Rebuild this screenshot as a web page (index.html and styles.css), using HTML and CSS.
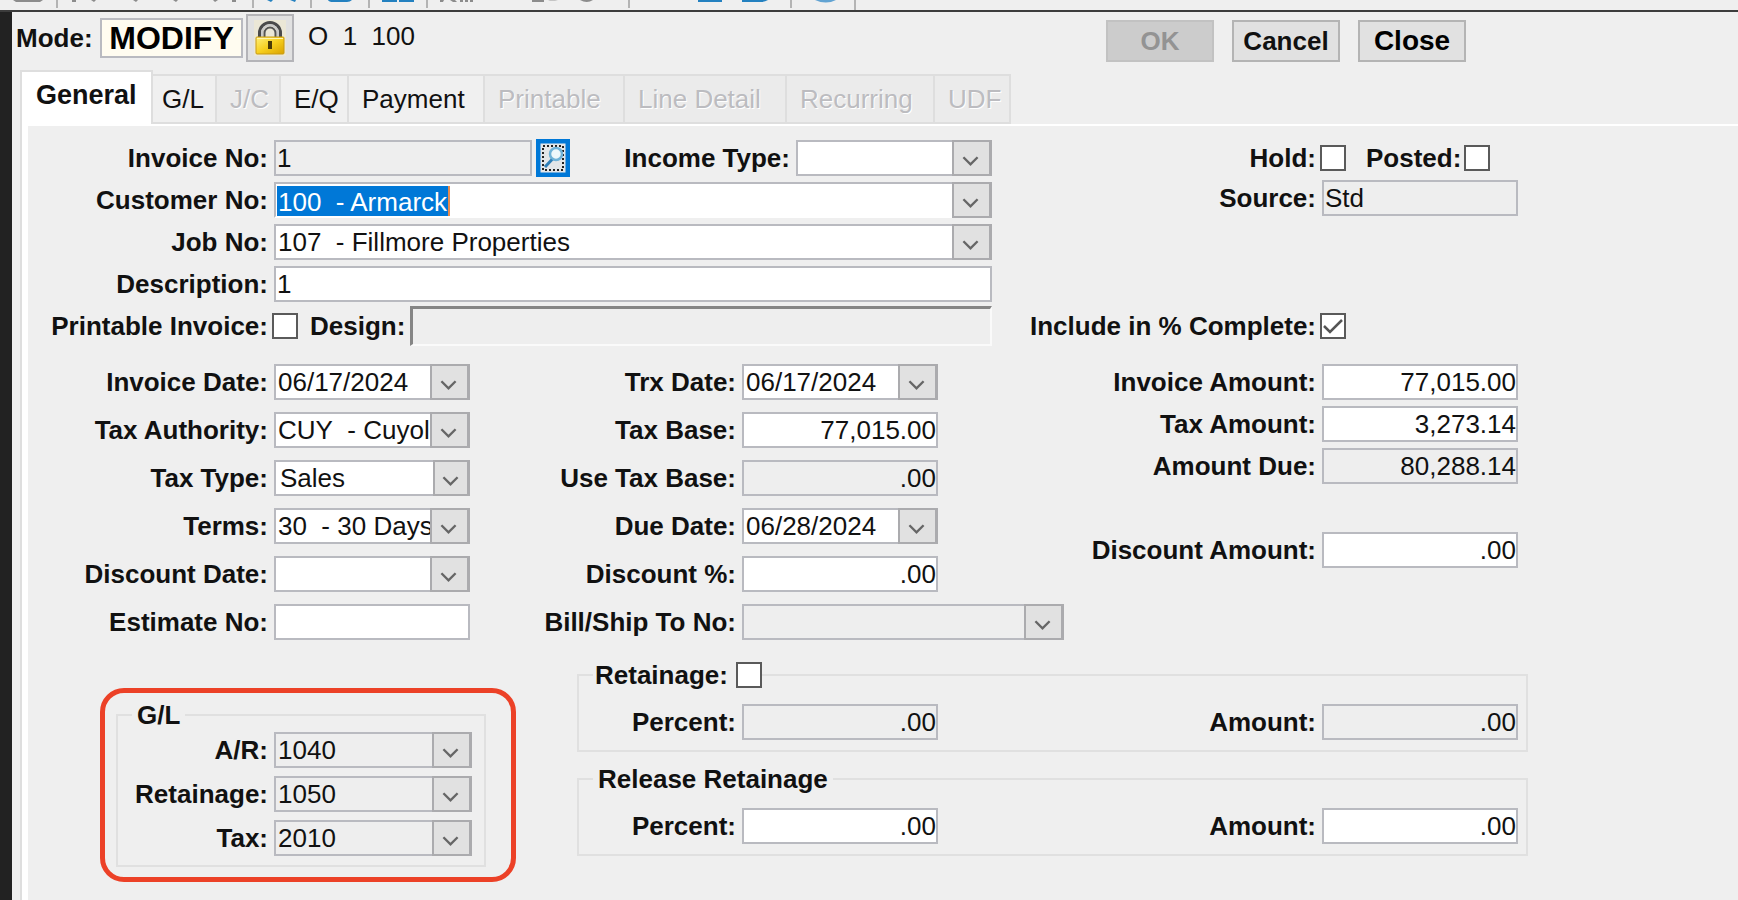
FILE: index.html
```html
<!DOCTYPE html>
<html lang="en">
<head>
<meta charset="utf-8">
<title>Invoice Entry</title>
<link rel="stylesheet" href="styles.css">
</head>
<body>
<svg class="defs" aria-hidden="true">
  <symbol id="chevron" viewBox="0 0 18 12"><path d="M1.500 2 L9 9.500 L16.500 2" fill="none" stroke="#666" stroke-width="2.500"/></symbol>
</svg>

<div class="toolbar" aria-hidden="true">
  <svg width="900" height="10" viewBox="0 0 900 10">
    <g fill="#b4b4b4">
      <rect x="56" width="2" height="8"/><rect x="252" width="2" height="8"/><rect x="310" width="2" height="8"/>
      <rect x="368" width="2" height="8"/><rect x="426" width="2" height="8"/><rect x="628" width="2" height="8"/>
      <rect x="790" width="2" height="8"/><rect x="854" width="2" height="10"/>
    </g>
    <g fill="#8c8c8c">
      <path d="M13 0H43L40 2H16Z"/><rect x="72" width="4" height="2"/><path d="M91 0h5l-2 2zM133 0h5l-2 2zM173 0h5l-2 2zM213 0h5l-3 2z"/><rect x="232" width="4" height="2"/>
      <path d="M440 0h4l-1 2h-3zM450 0h5l2 2h-4zM460 0h3v2h-3zM465 0h3v2h-3zM470 0h3v2h-3z"/>
      <rect x="532" width="12" height="2"/><path d="M580 0h13q-6 4-13 0z"/>
    </g>
    <path d="M548 0h10l-3 1h-5z" fill="#c4c4c4"/>
    <g fill="#2481c0">
      <path d="M267 0h6l-2 2zM290 0h6l-1 2zM328 0h24q-2 2-5 2h-14q-4 0-5-2z"/>
      <rect x="382" width="15" height="2"/><rect x="399" width="15" height="2"/>
      <rect x="698" width="24" height="2"/><path d="M742 0h26q-3 2-7 2h-19z"/>
    </g>
    <path d="M815 0h21q-10 5-21 0z" fill="#62a3d2"/>
  </svg>
</div>

<main class="window">
  <header class="mode-bar">
    <label class="mode-label" for="mode">Mode:</label>
    <output class="mode-value" id="mode">MODIFY</output>
    <button class="lock" type="button" aria-label="Lock">
      <svg width="32" height="36" viewBox="0 0 32 36">
        <defs><linearGradient id="gold" x1="0" y1="0" x2="1" y2="1"><stop offset="0" stop-color="#fff07a"/><stop offset=".5" stop-color="#f7cf1e"/><stop offset="1" stop-color="#d9a200"/></linearGradient></defs>
        <rect width="32" height="36" fill="#ebe7d6"/>
        <path d="M5.500 18V13a10 10 0 0 1 21 0v5" fill="none" stroke="#4a4a4a" stroke-width="3"/>
        <path d="M8 18V13a8 8 0 0 1 16 0v5" fill="none" stroke="#c9c9c9" stroke-width="2"/>
        <path d="M10.500 18V13a5.500 5.500 0 0 1 11 0v5" fill="none" stroke="#555" stroke-width="2"/>
        <rect x="2" y="17" width="28" height="17" rx="1" fill="url(#gold)" stroke="#c99a10"/>
        <path d="M3 18.500h26" stroke="#fff6b0"/>
        <path d="M14 21h4v8h-4z" fill="#4a3a08"/>
      </svg>
    </button>
    <span class="record">O  1  100</span>
    <div class="actions">
      <button type="button" disabled>OK</button>
      <button type="button">Cancel</button>
      <button type="button" class="close">Close</button>
    </div>
  </header>

  <nav class="tabs" role="tablist">
    <button type="button" role="tab" aria-selected="true">General</button>
    <button type="button" role="tab" class="short">G/L</button>
    <button type="button" role="tab" disabled>J/C</button>
    <button type="button" role="tab">E/Q</button>
    <button type="button" role="tab">Payment</button>
    <button type="button" role="tab" disabled>Printable</button>
    <button type="button" role="tab" disabled>Line Detail</button>
    <button type="button" role="tab" disabled>Recurring</button>
    <button type="button" role="tab" disabled>UDF</button>
  </nav>

  <form class="panel">
    <section class="top">
      <div class="stack tight">
        <div class="row main-row">
          <label for="invno">Invoice No:</label>
          <div class="inline">
            <input class="invoice-no" id="invno" type="text" value="1" readonly>
            <button class="lookup" type="button" aria-label="Look up invoice">
              <svg width="28" height="32" viewBox="0 0 28 32">
                <rect width="28" height="32" fill="#e4e6e8"/>
                <path d="M0 0h28v32H0z" fill="none" stroke="#0078d7" stroke-width="3"/>
                <rect x="4" y="4" width="20" height="24" fill="none" stroke="#222" stroke-width="2" stroke-dasharray="2 2"/>
                <circle cx="17" cy="12" r="6" fill="#eef7fb" stroke="#6fb2d8" stroke-width="2.500"/>
                <path d="M13 17.500 L6 25" stroke="#2f7fb8" stroke-width="3"/>
              </svg>
            </button>
            <label class="grow" for="income">Income Type:</label>
            <span class="combo std"><select id="income"><option></option></select><svg><use href="#chevron"/></svg></span>
          </div>
        </div>
        <div class="row main-row">
          <label for="customer">Customer No:</label>
          <span class="combo active"><select id="customer"><option>100&nbsp; - Armarck</option></select><svg><use href="#chevron"/></svg></span>
        </div>
        <div class="row main-row">
          <label for="job">Job No:</label>
          <span class="combo"><select id="job"><option>107&nbsp; - Fillmore Properties</option></select><svg><use href="#chevron"/></svg></span>
        </div>
        <div class="row main-row">
          <label for="desc">Description:</label>
          <input id="desc" type="text" value="1">
        </div>
        <div class="row main-row">
          <label for="printable">Printable Invoice:</label>
          <div class="inline">
            <input id="printable" type="checkbox">
            <label class="after-check" for="design">Design:</label>
            <input class="sunken" id="design" type="text" readonly>
          </div>
        </div>
      </div>
      <div class="stack right-top">
        <div class="row side-row">
          <label for="hold">Hold:</label>
          <div class="inline">
            <input id="hold" type="checkbox">
            <label class="posted" for="posted">Posted:</label>
            <input id="posted" type="checkbox">
          </div>
        </div>
        <div class="row side-row">
          <label for="source">Source:</label>
          <input id="source" type="text" value="Std" readonly>
        </div>
        <div class="row side-row last">
          <label for="include">Include in % Complete:</label>
          <input id="include" type="checkbox" checked>
        </div>
      </div>
    </section>

    <section class="middle">
      <div class="stack loose">
        <div class="row a-row"><label for="invdate">Invoice Date:</label><span class="combo"><select id="invdate"><option>06/17/2024</option></select><svg><use href="#chevron"/></svg></span></div>
        <div class="row a-row"><label for="taxauth">Tax Authority:</label><span class="combo"><select id="taxauth"><option>CUY&nbsp; - Cuyol</option></select><svg><use href="#chevron"/></svg></span></div>
        <div class="row a-row"><label for="taxtype">Tax Type:</label><span class="combo list"><select id="taxtype"><option>Sales</option></select><svg><use href="#chevron"/></svg></span></div>
        <div class="row a-row"><label for="terms">Terms:</label><span class="combo"><select id="terms"><option>30&nbsp; - 30 Days</option></select><svg><use href="#chevron"/></svg></span></div>
        <div class="row a-row"><label for="discdate">Discount Date:</label><span class="combo"><select id="discdate"><option></option></select><svg><use href="#chevron"/></svg></span></div>
        <div class="row a-row"><label for="estimate">Estimate No:</label><input id="estimate" type="text"></div>
      </div>
      <div class="stack loose">
        <div class="row b-row"><label for="trxdate">Trx Date:</label><span class="combo"><select id="trxdate"><option>06/17/2024</option></select><svg><use href="#chevron"/></svg></span></div>
        <div class="row b-row"><label for="taxbase">Tax Base:</label><input class="num" id="taxbase" type="text" value="77,015.00"></div>
        <div class="row b-row"><label for="usetax">Use Tax Base:</label><input class="num" id="usetax" type="text" value=".00" readonly></div>
        <div class="row b-row"><label for="duedate">Due Date:</label><span class="combo"><select id="duedate"><option>06/28/2024</option></select><svg><use href="#chevron"/></svg></span></div>
        <div class="row b-row"><label for="discpct">Discount %:</label><input class="num" id="discpct" type="text" value=".00"></div>
        <div class="row b-row"><label for="shipto">Bill/Ship To No:</label><span class="combo wide off"><select id="shipto"><option></option></select><svg><use href="#chevron"/></svg></span></div>
      </div>
      <div class="stack tight">
        <div class="row side-row"><label for="invamt">Invoice Amount:</label><input class="num" id="invamt" type="text" value="77,015.00"></div>
        <div class="row side-row"><label for="taxamt">Tax Amount:</label><input class="num" id="taxamt" type="text" value="3,273.14"></div>
        <div class="row side-row"><label for="amtdue">Amount Due:</label><input class="num" id="amtdue" type="text" value="80,288.14" readonly></div>
        <div class="row side-row spaced"><label for="discamt">Discount Amount:</label><input class="num" id="discamt" type="text" value=".00"></div>
      </div>
    </section>

    <section class="bottom">
      <div class="callout">
        <div class="group gl" role="group" aria-labelledby="gl-title">
          <div class="legend" id="gl-title">G/L</div>
          <div class="row gl-row"><label for="ar">A/R:</label><span class="combo off"><select id="ar"><option>1040</option></select><svg><use href="#chevron"/></svg></span></div>
          <div class="row gl-row"><label for="glret">Retainage:</label><span class="combo off"><select id="glret"><option>1050</option></select><svg><use href="#chevron"/></svg></span></div>
          <div class="row gl-row"><label for="gltax">Tax:</label><span class="combo off"><select id="gltax"><option>2010</option></select><svg><use href="#chevron"/></svg></span></div>
        </div>
      </div>
      <div class="retainage">
        <div class="group" role="group" aria-label="Retainage">
          <div class="legend with-check"><label for="ret">Retainage:</label><input id="ret" type="checkbox"></div>
          <div class="ret-row">
            <label for="retpct">Percent:</label><input class="num" id="retpct" type="text" value=".00" readonly>
            <label for="retamt">Amount:</label><input class="num" id="retamt" type="text" value=".00" readonly>
          </div>
        </div>
        <div class="group" role="group" aria-labelledby="rel-title">
          <div class="legend" id="rel-title">Release Retainage</div>
          <div class="ret-row">
            <label for="relpct">Percent:</label><input class="num" id="relpct" type="text" value=".00">
            <label for="relamt">Amount:</label><input class="num" id="relamt" type="text" value=".00">
          </div>
        </div>
      </div>
    </section>
  </form>
</main>
</body>
</html>
```

FILE: styles.css
```css
* { box-sizing: border-box; }

body {
  margin: 0;
  min-height: 100vh;
  display: flex;
  flex-direction: column;
  background: #efefef;
  color: #111;
  font: 26px/30px "Liberation Sans", Arial, sans-serif;
}

.defs { position: absolute; width: 0; height: 0; }

.toolbar {
  height: 12px;
  border-bottom: 2px solid #3c3c3c;
  overflow: hidden;
}
.toolbar svg { display: block; }

.window {
  flex: 1;
  display: flex;
  flex-direction: column;
  border-left: 12px solid #222;
}

button, input, select {
  font: inherit;
  color: inherit;
  margin: 0;
  border-radius: 0;
}

label, .legend {
  font-weight: bold;
  white-space: nowrap;
}

/* Mode bar */
.mode-bar {
  display: flex;
  align-items: center;
  height: 52px;
  padding: 0 272px 0 4px;
}
.mode-label { width: 84px; }
.mode-value {
  width: 143px;
  height: 40px;
  border: 2px solid #b9bac0;
  background: #fffcf0;
  color: #000;
  font-size: 32px;
  font-weight: bold;
  line-height: 36px;
  text-align: center;
}
.lock {
  width: 48px;
  height: 48px;
  margin-left: 3px;
  padding: 0;
  display: grid;
  place-items: center;
  border: 2px solid #b4b4b8;
  background: #e1e1e1;
}
.record {
  margin-left: 14px;
  padding-bottom: 4px;
  white-space: pre;
}
.actions {
  align-self: flex-end;
  margin: 0 0 2px auto;
  display: flex;
  gap: 18px;
}
.actions button {
  width: 108px;
  height: 42px;
  padding: 0;
  border: 2px solid #b4b4b4;
  background: #e1e1e1;
  font-weight: bold;
}
.actions button:disabled {
  border-color: #c2c2c2;
  background: #cccccc;
  color: #939393;
}
.actions .close { font-size: 28px; color: #000; }

/* Tabs */
.tabs {
  display: grid;
  grid-template-columns: 133px 64px 64px 68px 136px 140px 162px 148px 76px;
  align-items: end;
  height: 60px;
  padding-left: 8px;
}
.tabs button {
  height: 50px;
  padding: 0 0 0 13px;
  border: 2px solid #dedede;
  border-left-width: 0;
  background: #f0f0f0;
  text-align: left;
  white-space: nowrap;
}
.tabs button:disabled {
  background: #ebebeb;
  color: #bcbcc0;
  text-shadow: 1px 1px 0 #fff;
}
.tabs .short { padding-left: 9px; }
.tabs [aria-selected="true"] {
  height: 54px;
  padding: 0 0 6px 14px;
  border-left-width: 2px;
  border-bottom: 0;
  background: #fff;
  font-size: 27px;
  font-weight: bold;
}

/* Panel */
.panel {
  flex: 1;
  margin: 0 0 0 8px;
  padding: 16px 220px 0 0;
  border-left: 2px solid #dedede;
  box-shadow: inset 6px 2px 0 #fff;
}

.stack { display: flex; flex-direction: column; }
.tight { gap: 6px; }
.loose { gap: 12px; }

.row {
  display: grid;
  align-items: center;
  height: 36px;
}
.row > label:first-child { text-align: right; padding-right: 6px; }
.main-row { grid-template-columns: 252px 718px; }
.side-row { grid-template-columns: 1fr 196px; }
.a-row { grid-template-columns: 252px 196px; }
.b-row { grid-template-columns: 272px 196px; }
.gl-row { grid-template-columns: 156px 198px; }

.inline { display: flex; align-items: center; height: 36px; }

input[type="text"] {
  width: 100%;
  height: 36px;
  padding: 0 1px;
  border: 2px solid #b9bac0;
  background: #fff;
  outline: 0;
}
input[type="text"]:read-only { background: #eeeeee; }
input[type="text"].num { padding: 0; text-align: right; }
input[type="text"].invoice-no { width: 258px; }

input[type="text"].sunken {
  flex: 1;
  height: 40px;
  margin-left: 5px;
  border: 2px solid #fafafa;
  border-top: 3px solid #858585;
  border-left: 3px solid #858585;
}

input[type="checkbox"] {
  appearance: none;
  flex: none;
  width: 26px;
  height: 26px;
  margin-left: -2px;
  border: 2px solid #5a5a5a;
  background: #fff;
}
input[type="checkbox"]:checked {
  background: #fff url("data:image/svg+xml,%3Csvg xmlns='http://www.w3.org/2000/svg' viewBox='0 0 22 22'%3E%3Cpath d='M2 11l6 6L20 5' fill='none' stroke='%23555' stroke-width='2.500'/%3E%3C/svg%3E") center / 22px 22px no-repeat;
}
.after-check { margin-left: 12px; }
.posted { margin: 0 5px 0 20px; }

.lookup {
  flex: none;
  width: 34px;
  height: 38px;
  margin-left: 4px;
  padding: 0;
  border: 3px solid #0078d7;
  background: #fff;
}
.lookup svg { display: block; }
.grow { flex: 1; text-align: right; padding-right: 6px; }

/* Drop-downs: the select and its arrow share one grid cell */
.combo { display: grid; }
.combo.std { width: 196px; }
.combo.wide { width: 322px; }
.combo select, .combo svg { grid-area: 1 / 1; }
.combo select {
  appearance: none;
  width: 100%;
  min-width: 0;
  height: 36px;
  padding: 0 38px 0 2px;
  border: 2px solid #b9bac0;
  background: #fff;
  outline: 0;
}
.combo svg {
  justify-self: end;
  width: 40px;
  height: 36px;
  padding: 13px 10px 7px 8px;
  border: 2px solid #ababae;
  border-right-width: 3px;
  background: #e1e1e1;
  pointer-events: none;
}
.combo.off select { background: #eeeeee; }
.combo.list svg { width: 37px; padding: 13px 8px 7px 7px; }
.combo.list select { padding-left: 4px; }
.combo.active select {
  padding-top: 3px;
  border-bottom-color: #fff;
  background:
    linear-gradient(#0078d7, #0078d7) 1px 2px / 171px 32px no-repeat,
    linear-gradient(#e58a4e, #e58a4e) 172px 2px / 2px 32px no-repeat,
    #fff;
  color: #fff;
}

/* Sections */
.top, .middle { display: grid; }
.top { grid-template-columns: 970px 1fr; }
.right-top { gap: 4px; }
.right-top .last { margin-top: auto; }
.middle {
  grid-template-columns: 448px 468px 1fr;
  margin-top: 20px;
}
.spaced { margin-top: 42px; }

.bottom {
  display: flex;
  align-items: flex-start;
  margin: 34px -10px 0 0;
}
.callout {
  width: 416px;
  margin: 14px 61px 0 78px;
  padding: 21px 25px 10px 11px;
  border: 5px solid #ec4127;
  border-radius: 24px;
}
.group { border: 2px solid #e0e0e0; }
.legend {
  width: max-content;
  height: 30px;
  margin: -16px 0 0 14px;
  padding: 0 5px;
  background: #efefef;
}
.gl {
  display: flex;
  flex-direction: column;
  gap: 8px;
  padding-bottom: 9px;
}
.gl .legend { margin-bottom: -6px; }
.retainage {
  flex: 1;
  display: flex;
  flex-direction: column;
  gap: 26px;
}
.retainage .legend { margin-bottom: 14px; }
.with-check {
  display: flex;
  align-items: center;
  gap: 10px;
  padding: 0 0 0 2px;
}
.ret-row {
  display: grid;
  grid-template-columns: 163px 196px 1fr 196px;
  align-items: center;
  padding: 0 8px 10px 0;
}
.ret-row label { text-align: right; padding-right: 6px; }
```
